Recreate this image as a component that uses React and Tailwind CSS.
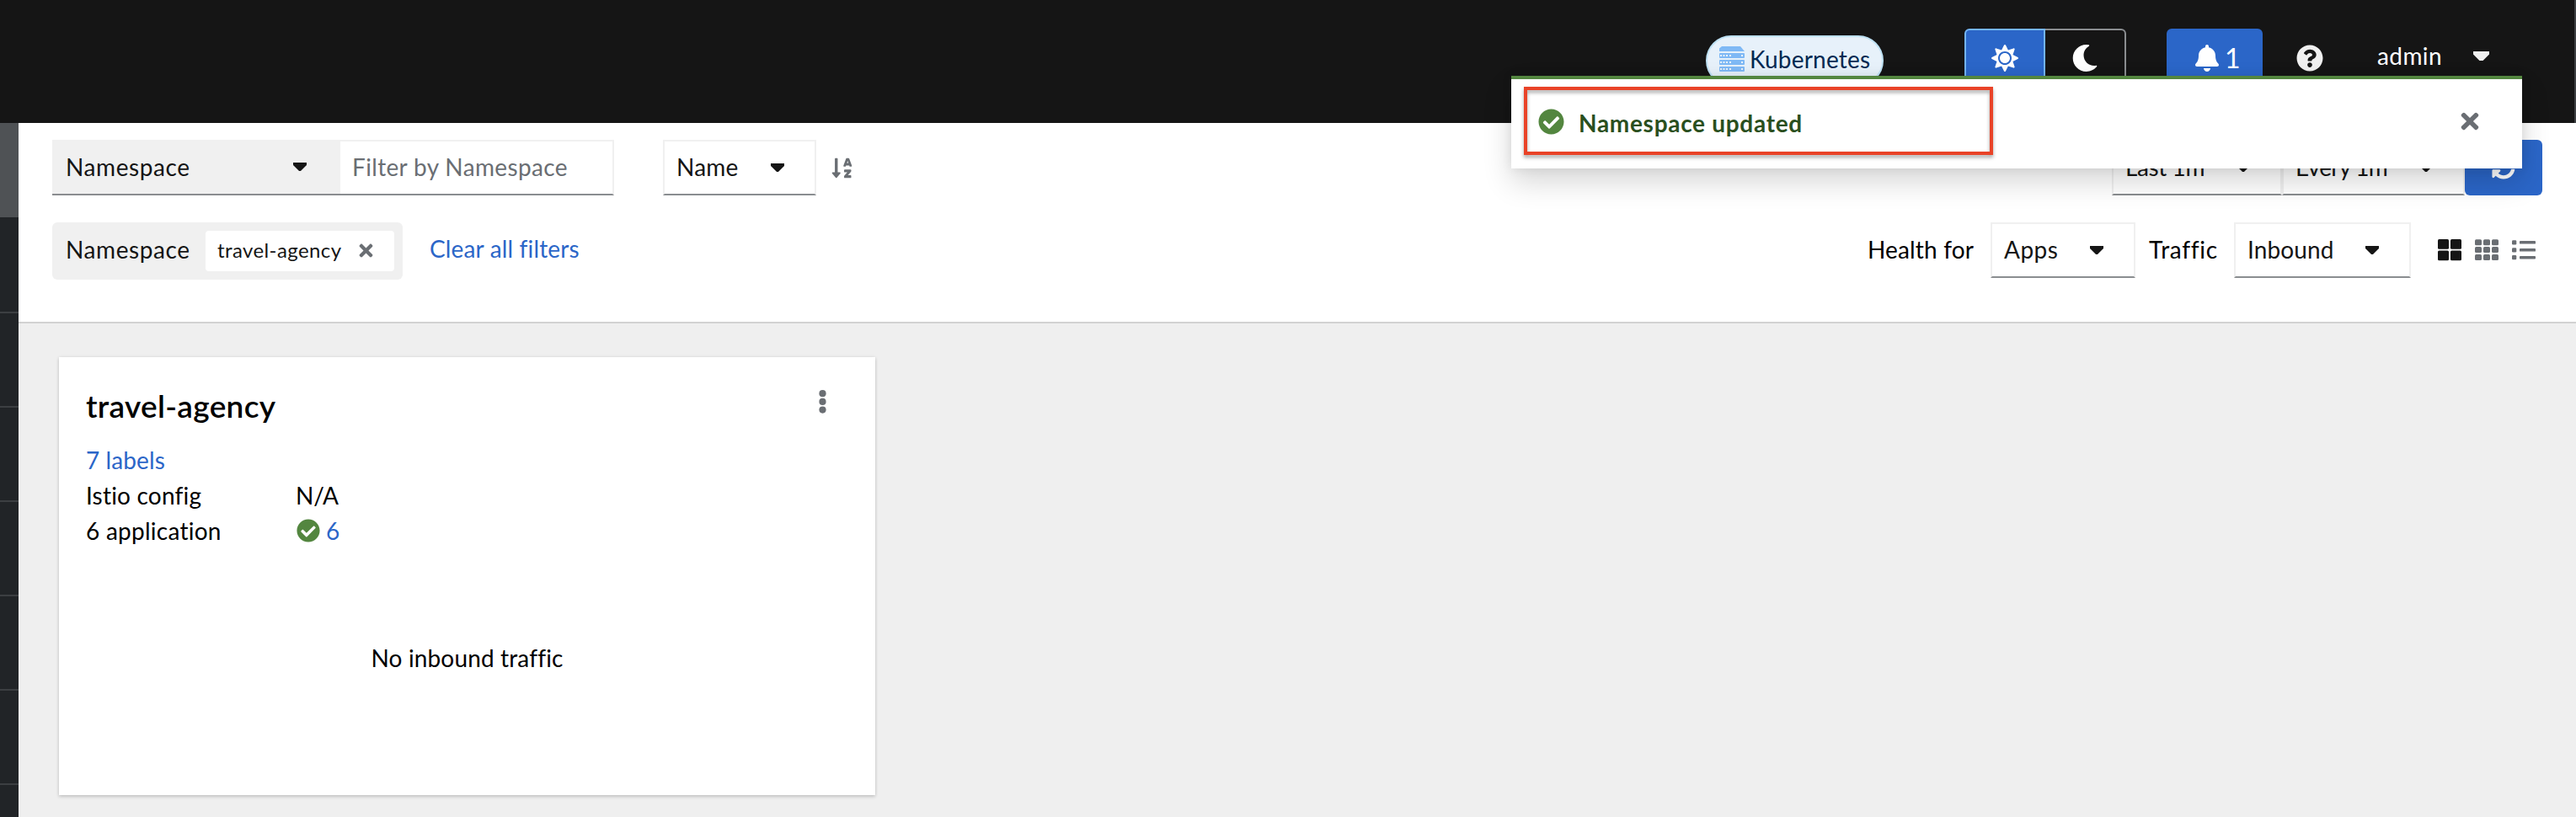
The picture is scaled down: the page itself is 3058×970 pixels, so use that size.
import React from "react";
import { FaBell, FaCheckCircle, FaMoon, FaQuestionCircle, FaSortAlphaDown, FaSun, FaSyncAlt, FaTimes } from "react-icons/fa";

function Caret({ className = "w-4" }) {
  return (
    <svg className={`${className} shrink-0`} viewBox="31 192 258 160" fill="currentColor">
      <path d="M31.3 192h257.3c17.8 0 26.7 21.500 14.100 34.100L174.100 354.800c-7.800 7.800-20.500 7.800-28.300 0L17.200 226.100C4.600 213.500 13.500 192 31.300 192z" />
    </svg>
  );
}

function ServerIcon() {
  return (
    <svg className="w-[30px] h-[30px] shrink-0" viewBox="0 0 30 30">
      <path d="M0 6V2.500L3 0H25L30 6Z" fill="#7fb9f5" />
      {[8, 16, 24].map((y) => (
        <g key={y}>
          <rect y={y} width="30" height="6" rx="1" fill="#7fb9f5" />
          {[1, 4.500, 8, 12, 26].map((x) => (
            <rect key={x} x={x} y={y + 2} width="2" height="2" fill="#e7f1fa" />
          ))}
        </g>
      ))}
    </svg>
  );
}

function LargeGridIcon() {
  return (
    <svg className="w-7 h-[26px]" viewBox="0 0 28 26" fill="#151515">
      {[0, 15].map((x) => [0, 13.500].map((y) => <rect key={`${x}-${y}`} x={x} y={y} width="13" height="11.700" rx="1.500" />))}
    </svg>
  );
}

function SmallGridIcon() {
  return (
    <svg className="w-7 h-[26px]" viewBox="0 0 28 26" fill="#6a6e73">
      {[0, 10, 20].map((x) => [0.2, 9.100, 18].map((y) => <rect key={`${x}-${y}`} x={x} y={y} width="8" height="7" rx="1.500" />))}
    </svg>
  );
}

function ListIcon() {
  return (
    <svg className="w-7 h-[26px]" viewBox="0 0 28 26" fill="#6a6e73">
      {[1.200, 10.200, 19].map((y) => (
        <g key={y}>
          <rect x="0" y={y} width="5.300" height="5.300" rx="1.300" />
          <rect x="9" y={y + 0.900} width="19" height="3.500" rx="0.900" />
        </g>
      ))}
    </svg>
  );
}

function Select({ label, width, tracking }) {
  return (
    <div className={`${width} h-[66px] shrink-0 flex items-center pl-[14px] border-2 border-[#f0f0f0] border-b-[#8a8d90] text-[#151515]`}>
      <span className={`${tracking} pb-[2px]`}>{label}</span>
      <span className="ml-auto mr-9"><Caret /></span>
    </div>
  );
}

function Header() {
  return (
    <header className="h-[146px] shrink-0 bg-[#151515] border-r-2 border-[#3c3f42] text-white">
      <div className="h-[138px] flex items-center justify-end pr-[101px]">
        <div className="mt-[6px] mr-24 w-[211px] h-[60px] rounded-full border-2 border-[#bee1f4] bg-[#e7f1fa] flex items-center pl-[14px]">
          <div className="mb-1"><ServerIcon /></div>
          <span className="ml-[6px] pb-[4px] text-[#002952] tracking-[0.2px]">Kubernetes</span>
        </div>
        <div className="flex mr-12 h-[70px]">
          <div className="w-[96px] rounded-l-md border-2 border-[#73b4f5] bg-[#2b66c8] flex items-center justify-center"><FaSun size={32} /></div>
          <div className="w-[96px] rounded-r-md border-2 border-l-0 border-[#8a8d90] flex items-center justify-center"><FaMoon size={32} /></div>
        </div>
        <div className="w-[114px] h-[70px] rounded-md bg-[#2b66c8] flex items-center pl-[32px]">
          <FaBell size={32} />
          <span className="text-[32px] ml-[5px] pb-px">1</span>
        </div>
        <FaQuestionCircle size={32} className="ml-10 mr-[64px] text-[#f0f0f0]" />
        <span className="mb-[6px] w-[77px] tracking-[0.4px]">admin</span>
        <Caret className="w-[19px] ml-[37px] mb-[5px] text-[#f0f0f0]" />
      </div>
    </header>
  );
}

function Sidebar() {
  return (
    <nav className="w-[22px] shrink-0 bg-[#212427] overflow-hidden">
      <div className="h-[112px] bg-[#4f5255]" />
      <div className="h-[112px]" />
      {[0, 1, 2, 3, 4, 5].map((i) => (
        <div key={i} className="h-[112px] border-t-2 border-[#3c3f42]" />
      ))}
    </nav>
  );
}

function Toolbar() {
  return (
    <section className="h-[238px] bg-white border-b-2 border-[#d2d2d2] pt-5 px-10">
      <div className="flex h-[66px]">
        <div className="w-[342px] flex items-center pl-[16px] pr-[40px] bg-[#f0f0f0] border-b-2 border-[#8a8d90] text-[#151515]">
          <span className="tracking-[0.6px]">Namespace</span>
          <span className="ml-auto"><Caret /></span>
        </div>
        <div className="w-[325px] flex items-center pl-[14px] border-2 border-l-0 border-[#f0f0f0] border-b-[#8a8d90] text-[#6a6e73]">
          <span className="pb-[2px] tracking-[0.35px]">Filter by Namespace</span>
        </div>
        <div className="w-[58px]" />
        <Select label="Name" width="w-[182px]" tracking="tracking-[0.2px]" />
        <FaSortAlphaDown size={27} className="ml-[17px] mt-[20px] text-[#6a6e73]" />
        <div className="ml-auto flex">
          <Select label="Last 1m" width="w-[202px]" tracking="tracking-[-0.4px]" />
          <Select label="Every 1m" width="w-[217px]" tracking="tracking-[-0.7px]" />
          <div className="w-[92px] rounded-md bg-[#2b66c8] text-white flex items-center justify-center"><FaSyncAlt size={28} /></div>
        </div>
      </div>

      <div className="flex mt-8 h-[68px]">
        <div className="w-[416px] rounded-md bg-[#f0f0f0] flex items-center pl-[16px] pr-[10px] text-[#151515]">
          <span className="pb-[4px] tracking-[0.6px]">Namespace</span>
          <div className="ml-auto w-[224px] h-12 rounded bg-white flex items-center pl-[14px]">
            <span className="text-2xl pb-[3px] w-[151px] tracking-[0.4px]">travel-agency</span>
            <FaTimes size={23} className="ml-[14px] mb-[2px] text-[#6a6e73]" />
          </div>
        </div>
        <a className="ml-[32px] mt-[10px] text-[#2b66c8] tracking-[0.15px]">Clear all filters</a>
        <div className="ml-auto mr-2 flex h-[66px] items-center text-black">
          <span className="w-[146px] pb-[2px] tracking-[0.15px]">Health for</span>
          <Select label="Apps" width="w-[172px]" tracking="tracking-[0.5px]" />
          <span className="ml-[16px] w-[101px] pb-[2px] tracking-[0.7px]">Traffic</span>
          <Select label="Inbound" width="w-[210px]" tracking="tracking-[0.1px]" />
          <div className="ml-8 flex gap-4"><LargeGridIcon /><SmallGridIcon /><ListIcon /></div>
        </div>
      </div>
    </section>
  );
}

function NamespaceCard() {
  return (
    <article className="w-[969px] h-[520px] bg-white px-8 pt-[35px] text-black shadow-[0_2px_4px_rgba(3,3,3,0.16),0_0_4px_rgba(3,3,3,0.08)]">
      <div className="flex justify-between">
        <h2 className="text-[37px] leading-[45px] font-semibold tracking-[0.3px]">travel-agency</h2>
        <svg className="w-[9px] h-[28px] mt-1 mr-[26px]" viewBox="0 0 9 28" fill="#6a6e73">
          <circle cx="4.500" cy="4.200" r="4.100" />
          <circle cx="4.500" cy="13.900" r="4.100" />
          <circle cx="4.500" cy="23.600" r="4.100" />
        </svg>
      </div>
      <div className="mt-[21px] text-[#2b66c8] tracking-[0.1px]">7 labels</div>
      <div className="grid grid-cols-[249px_1fr]">
        <span className="tracking-[0.2px]">Istio config</span>
        <span className="tracking-[-0.2px]">N/A</span>
        <span className="tracking-[0.25px]">6 application</span>
        <span className="flex items-center gap-[7px] pl-px text-[#2b66c8]">
          <FaCheckCircle size={28} className="text-[#53863f]" />6
        </span>
      </div>
      <div className="mt-[109px] text-center tracking-[0.15px]">No inbound traffic</div>
    </article>
  );
}

function Toast() {
  return (
    <div className="absolute z-10 left-[1794px] top-[90px] w-[1200px] h-[110px] bg-white border-t-4 border-[#53863f] flex items-center pl-[32px] pr-[47px] shadow-[0_16px_32px_rgba(3,3,3,0.16),0_0_12px_rgba(3,3,3,0.08)]">
      <FaCheckCircle size={31} className="mb-[6px] text-[#53863f]" />
      <span className="ml-[17px] mb-[2px] font-bold tracking-[0.7px] text-[#2a4f1e]">Namespace updated</span>
      <FaTimes size={30} className="ml-auto mb-[6px] text-[#6a6e73]" />
      <div className="absolute left-[15px] top-[9px] w-[557px] h-[81px] border-4 border-[#e94328] drop-shadow-[0_3px_2px_rgba(0,0,0,0.35)]" />
    </div>
  );
}

export default function App() {
  return (
    <div className="relative w-[3058px] h-[970px] overflow-hidden flex flex-col font-['Lato','Liberation_Sans',sans-serif] text-[28px] leading-[42px] whitespace-nowrap [font-variant-ligatures:none]">
      <Header />
      <div className="flex h-[824px]">
        <Sidebar />
        <main className="flex-1 bg-[#efefef]">
          <Toolbar />
          <div className="pt-10 pl-12"><NamespaceCard /></div>
        </main>
      </div>
      <Toast />
    </div>
  );
}
